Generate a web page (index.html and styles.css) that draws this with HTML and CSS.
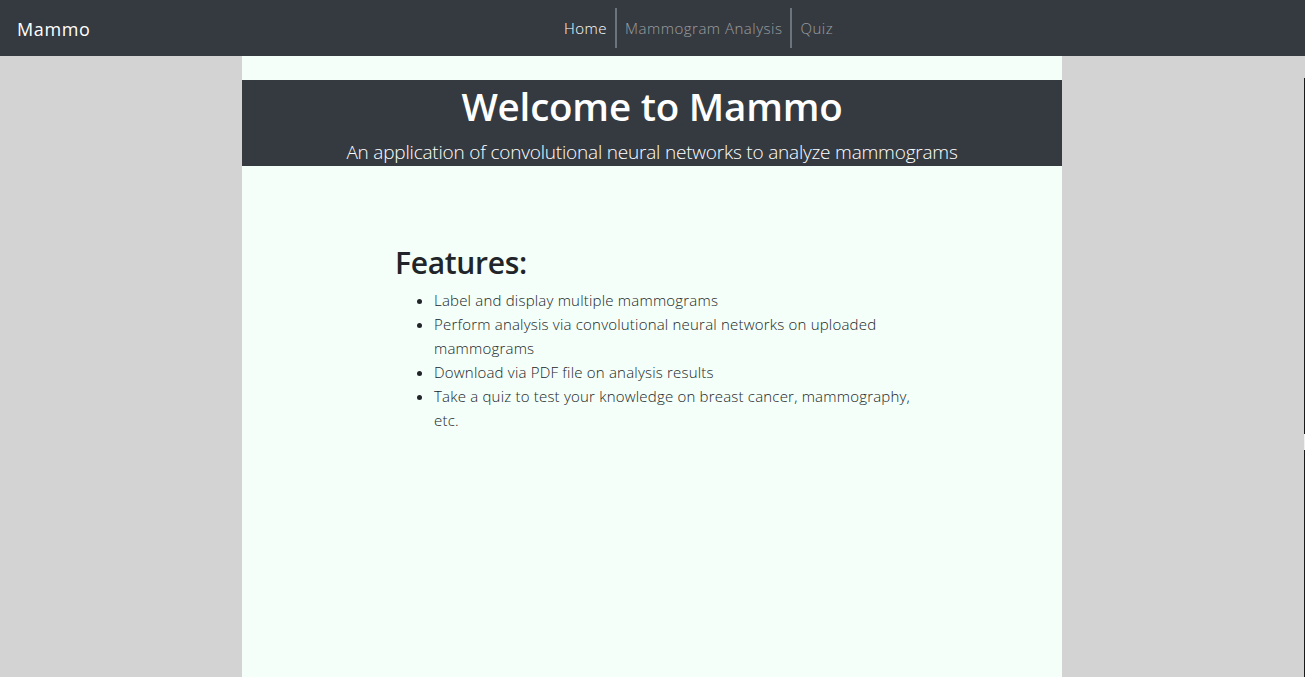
FILE: index.html
```html
<!DOCTYPE html>
<html lang="en">
<head>
<meta charset="utf-8">
<title>Mammo</title>
<link rel="stylesheet" href="styles.css">
</head>
<body>
<nav class="navbar">
  <a class="brand" href="#">Mammo</a>
  <ul class="nav-links">
    <li><a class="nav-link active" href="#">Home</a></li>
    <li class="sep"></li>
    <li><a class="nav-link" href="#">Mammogram Analysis</a></li>
    <li class="sep"></li>
    <li><a class="nav-link" href="#">Quiz</a></li>
  </ul>
</nav>
<main class="page">
  <header class="hero">
    <h1 class="hero-title">Welcome to Mammo</h1>
    <p class="hero-sub">An application of convolutional neural networks to analyze mammograms</p>
  </header>
  <section class="features">
    <h2 class="features-title">Features:</h2>
    <ul class="features-list">
      <li>Label and display multiple mammograms</li>
      <li>Perform analysis via convolutional neural networks on uploaded mammograms</li>
      <li>Download via PDF file on analysis results</li>
      <li>Take a quiz to test your knowledge on breast cancer, mammography, etc.</li>
    </ul>
  </section>
</main>
<div class="edge-line"><span class="edge-gap"></span></div>
</body>
</html>
```
FILE: styles.css
```css
* { box-sizing: border-box; }
html, body { height: 100%; }
body {
  margin: 0;
  padding-right: 1px;
  background: #d3d3d3;
  font-family: "Open Sans", "Noto Sans", "Liberation Sans", sans-serif;
  color: #212529;
  display: flex;
  flex-direction: column;
  overflow: hidden;
}
.navbar {
  height: 56px;
  flex: 0 0 56px;
  margin-right: -1px;
  background: #343a40;
  display: flex;
  align-items: center;
  position: relative;
  padding: 0 17px;
}
.brand {
  color: #fff;
  text-decoration: none;
  font-size: 18px;
  letter-spacing: 0.6px;
  font-weight: 400;
  padding-top: 2px;
}
.nav-links {
  list-style: none;
  margin: 0;
  padding: 0;
  display: flex;
  align-items: center;
  height: 40px;
  position: absolute;
  left: 556px;
  top: 8px;
}
.nav-links li { display: flex; align-items: center; height: 40px; }
.sep { width: 2px; background: #6c757d; height: 40px; }
.nav-link {
  color: rgba(255,255,255,0.5);
  text-decoration: none;
  font-size: 15px;
  font-weight: 300;
  padding: 0 8px;
  letter-spacing: 0.5px;
}
.nav-link.active { color: #fff; }
.page {
  width: 820px;
  margin: 0 auto;
  flex: 1;
  background: #f3fff8;
  padding-top: 24px;
}
.hero {
  background: #343a40;
  color: #fff;
  text-align: center;
  height: 86px;
  padding-top: 4px;
}
.hero-title {
  margin: 0;
  font-size: 38.5px;
  font-weight: 600;
  line-height: 44px;
  letter-spacing: -0.2px;
}
.hero-sub {
  margin: 11px 0 0;
  font-size: 19px;
  font-weight: 300;
  line-height: 26px;
  letter-spacing: -0.2px;
}
.features {
  padding: 77px 0 0 153px;
  width: 680px;
}
.features-title {
  margin: 0 0 5px;
  font-size: 30px;
  font-weight: 600;
  line-height: 40px;
  letter-spacing: -0.3px;
}
.features-list {
  margin: 0;
  padding-left: 39px;
  font-size: 15px;
  font-weight: 300;
  line-height: 24px;
  letter-spacing: 0.2px;
  color: #212529;
}
.edge-line {
  position: fixed;
  right: 0;
  top: 78px;
  bottom: 0;
  width: 1px;
  background: #1a1a1a;
}
.edge-gap {
  position: absolute;
  left: 0;
  top: 356px;
  height: 16px;
  width: 1px;
  background: #f0f0f0;
}
```
